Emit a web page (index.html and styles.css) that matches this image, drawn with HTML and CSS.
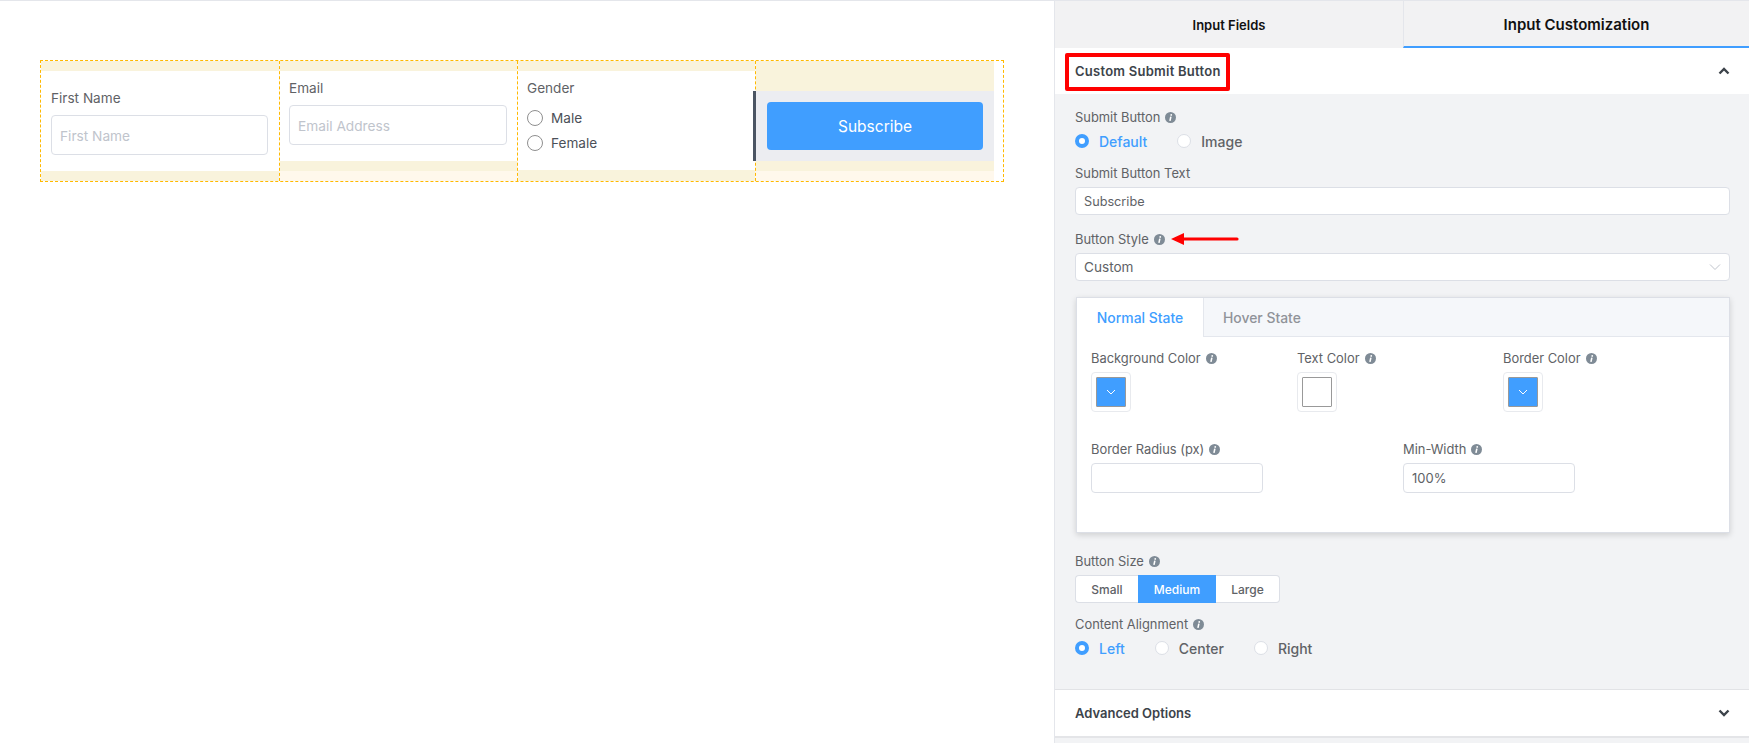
FILE: index.html
```html
<!DOCTYPE html>
<html lang="en">
<head>
  <meta charset="UTF-8" />
  <title>Custom Submit Button</title>
  <meta name="viewport" content="width=device-width, initial-scale=1.0" />
  <link rel="stylesheet" href="styles.css">
</head>
<body>

<svg class="defs" width="0" height="0">
  <symbol id="info" viewBox="0 0 12 12">
    <circle cx="6" cy="6" r="6" fill="#7f8b96"/>
    <circle cx="6.8" cy="3.2" r="1" fill="#fff"/>
    <path d="M6.4 5 5.4 9.6" stroke="#fff" stroke-width="1.7" fill="none"/>
  </symbol>
</svg>

<div class="page">
  <main class="canvas">
    <div class="form-row">
      <div class="col">
        <div class="col-box col-box-tall">
          <div class="col-fill col-first">
            <label class="form-label">First Name</label>
            <input class="form-input" type="text" placeholder="First Name" />
          </div>
        </div>
      </div>
      <div class="col">
        <div class="col-box">
          <div class="col-fill">
            <label class="form-label">Email</label>
            <input class="form-input" type="text" placeholder="Email Address" />
          </div>
        </div>
      </div>
      <div class="col">
        <div class="col-box col-box-tall">
          <div class="col-fill col-gender">
            <label class="form-label">Gender</label>
            <div class="gender-opt"><span class="gender-radio"></span>Male</div>
            <div class="gender-opt"><span class="gender-radio"></span>Female</div>
          </div>
        </div>
      </div>
      <div class="col">
        <div class="col-box col-box-submit">
          <div class="col-submit">
            <button class="subscribe-btn" type="button">Subscribe</button>
          </div>
        </div>
      </div>
    </div>
  </main>

  <aside class="panel">
    <div class="panel-tabs">
      <div class="panel-tab">Input Fields</div>
      <div class="panel-tab active">Input Customization</div>
    </div>

    <div class="section-head">
      <span class="section-title marked">Custom Submit Button</span>
      <svg class="chevron" viewBox="0 0 12 8"><path d="M1.5 6.5 6 2l4.5 4.5"/></svg>
    </div>

    <div class="section-body">
      <div class="field gap-13">
        <div class="field-label">Submit Button <svg class="info"><use href="#info"/></svg></div>
        <div class="radio-row">
          <span class="radio-opt on"><span class="radio"></span>Default</span>
          <span class="radio-opt"><span class="radio"></span>Image</span>
        </div>
      </div>

      <div class="field gap-15">
        <div class="field-label">Submit Button Text</div>
        <input class="text-input" type="text" value="Subscribe" />
      </div>

      <div class="field gap-16">
        <div class="field-label">Button Style <svg class="info"><use href="#info"/></svg>
          <svg class="red-arrow" viewBox="0 0 68 12"><path d="M0 6 13 0v4.4h53a1.6 1.6 0 0 1 0 3.2H13V12z"/></svg>
        </div>
        <div class="select-box">
          <span>Custom</span>
          <svg class="select-caret" viewBox="0 0 12 8"><path d="M1 1.5 6 6.5l5-5"/></svg>
        </div>
      </div>

      <div class="state-card">
        <div class="state-tabs">
          <div class="state-tab active">Normal State</div>
          <div class="state-tab">Hover State</div>
        </div>
        <div class="state-body">
          <div class="color-grid">
            <div>
              <div class="field-label">Background Color <svg class="info"><use href="#info"/></svg></div>
              <div class="swatch"><div class="swatch-in blue"><svg viewBox="0 0 12 8"><path d="M2 2l4 4 4-4"/></svg></div></div>
            </div>
            <div>
              <div class="field-label">Text Color <svg class="info"><use href="#info"/></svg></div>
              <div class="swatch"><div class="swatch-in"></div></div>
            </div>
            <div>
              <div class="field-label">Border Color <svg class="info"><use href="#info"/></svg></div>
              <div class="swatch"><div class="swatch-in blue"><svg viewBox="0 0 12 8"><path d="M2 2l4 4 4-4"/></svg></div></div>
            </div>
          </div>
          <div class="size-grid">
            <div>
              <div class="field-label">Border Radius (px) <svg class="info"><use href="#info"/></svg></div>
              <input class="text-input small" type="text" />
            </div>
            <div>
              <div class="field-label">Min-Width <svg class="info"><use href="#info"/></svg></div>
              <input class="text-input small" type="text" value="100%" />
            </div>
          </div>
        </div>
      </div>

      <div class="field gap-12">
        <div class="field-label">Button Size <svg class="info"><use href="#info"/></svg></div>
        <div class="btn-group">
          <span class="btn-opt">Small</span>
          <span class="btn-opt on">Medium</span>
          <span class="btn-opt">Large</span>
        </div>
      </div>

      <div class="field">
        <div class="field-label">Content Alignment <svg class="info"><use href="#info"/></svg></div>
        <div class="radio-row">
          <span class="radio-opt on"><span class="radio"></span>Left</span>
          <span class="radio-opt"><span class="radio"></span>Center</span>
          <span class="radio-opt"><span class="radio"></span>Right</span>
        </div>
      </div>
    </div>

    <div class="section-head section-closed">
      <span class="section-title">Advanced Options</span>
      <svg class="chevron" viewBox="0 0 12 8"><path d="M1.5 1.5 6 6l4.5-4.5"/></svg>
    </div>
  </aside>
</div>

</body>
</html>
```

FILE: styles.css
```css
* { box-sizing: border-box; }
html, body { margin: 0; height: 100%; overflow: hidden; }
body {
  font-family: Inter, "Noto Sans", Arial, sans-serif;
  background: white;
  color: #606266;
}
.defs { position: absolute; }
.page {
  display: flex;
  height: 743px;
  border-top: 1px solid #e4e6eb;
}

/* left canvas */
.canvas { flex: 1; padding: 59px 40px 0; }
.form-row {
  display: grid;
  grid-template-columns: 238px 238px 238px 239px;
  width: 964px;
  height: 122px;
  padding-right: 9px;
  border: 1px dashed #ffb900;
}
.col { background: #fff8ec; border-left: 1px dashed #ffb900; height: 120px; }
.col:first-child { border-left: none; }
.col-box { background: #f9f3dc; padding: 10px 0; height: 110px; }
.col-box-tall { height: 120px; }
.col-box-submit { padding: 30px 0 10px; }
.col-fill { background: white; height: 90px; padding: 8px 10px 0 9px; }
.col-first { height: 100px; padding: 18px 11px 0 10px; }
.col-gender { height: 99px; padding-left: 9px; }
.form-label { display: block; font-size: 13.6px; line-height: 18px; margin-bottom: 8px; color: #5f6266; }
.form-input {
  display: block;
  width: 100%;
  height: 40px;
  padding: 1px 8px 0;
  border: 1px solid #dcdfe6;
  border-radius: 4px;
  font: 13.7px Inter, sans-serif;
}
.form-input::placeholder { color: #c0c4cc; }
.gender-opt { display: flex; align-items: center; height: 25px; font-size: 13.6px; color: #4b5058; }
.gender-radio {
  width: 16px;
  height: 16px;
  margin-right: 8px;
  border: 1px solid #8f8f8f;
  border-radius: 50%;
  background: white;
}
.col-submit {
  background: #ecedf1;
  border-left: 3px solid #4b5563;
  margin-left: -3px;
  height: 70px;
  padding: 11px;
}
.subscribe-btn {
  display: block;
  width: 100%;
  height: 48px;
  border: none;
  border-radius: 4px;
  background: #409eff;
  color: white;
  font: 15.5px Inter, sans-serif;
}

/* right panel */
.panel {
  width: 695px;
  background: #f2f3f5;
  border-left: 1px solid #e4e6eb;
}
.panel-tabs { display: flex; height: 47px; background: #f2f2f3; }
.panel-tab {
  flex: 1;
  display: flex;
  align-items: center;
  justify-content: center;
  font-size: 13px;
  font-weight: 600;
  color: #111;
  border-left: 1px solid #e4e6eb;
}
.panel-tab:first-child { flex: 0 0 348px; border-left: none; }
.panel-tab.active { font-size: 15px; border-bottom: 2px solid #409eff; padding-top: 2px; }

.section-head {
  display: flex;
  justify-content: space-between;
  align-items: center;
  height: 46px;
  padding: 0 19px 0 20px;
  background: white;
}
.section-title { font-size: 13px; font-weight: 600; color: #3c434a; }
.marked { position: relative; letter-spacing: 0.25px; }
.marked::after {
  content: "";
  position: absolute;
  left: -10px;
  right: -9px;
  top: -10px;
  bottom: -12px;
  border: 4px solid #f00;
  border-radius: 2px;
}
.chevron { width: 12px; height: 8px; fill: none; stroke: #3c434a; stroke-width: 2.4; }
.section-closed {
  height: 49px;
  margin-top: 31px;
  border-top: 1px solid #e2e3e6;
  border-bottom: 2px solid #e4e5e8;
}

.section-body { padding: 14px 19px 0 20px; }
.field { margin-bottom: 0; }
.gap-12 { margin-bottom: 12px; }
.gap-13 { margin-bottom: 13px; }
.gap-15 { margin-bottom: 15px; }
.gap-16 { margin-bottom: 16px; }
.field-label {
  display: flex;
  align-items: center;
  gap: 5px;
  height: 18px;
  font-size: 12.9px;
  color: #606266;
  margin-bottom: 5px;
}
.info { width: 11px; height: 11px; }
.red-arrow { width: 68px; height: 12px; fill: #f00; margin-left: 1px; }
.radio-row { display: flex; gap: 30px; height: 20px; align-items: center; }
.radio-opt { display: flex; align-items: center; gap: 10px; font-size: 14px; font-weight: 500; color: #606266; }
.radio-opt.on { color: #409eff; }
.radio {
  width: 14px;
  height: 14px;
  border: 1px solid #dcdfe6;
  border-radius: 50%;
  background: white;
}
.radio-opt.on .radio { border: 4.5px solid #409eff; }
.text-input {
  display: block;
  width: 100%;
  height: 28px;
  padding: 0 8px;
  border: 1px solid #dcdfe6;
  border-radius: 4px;
  background: white;
  font: 12.7px Inter, sans-serif;
  color: #606266;
}
.text-input.small { width: 172px; height: 30px; font-size: 13px; }
.select-box {
  display: flex;
  justify-content: space-between;
  align-items: center;
  height: 28px;
  padding: 0 8px;
  border: 1px solid #dcdfe6;
  border-radius: 4px;
  background: white;
  font-size: 13.6px;
}
.select-caret { width: 12px; height: 8px; fill: none; stroke: #c0c4cc; stroke-width: 1; }

.state-card {
  height: 236px;
  margin: 0 0 19px 1px;
  background: white;
  border: 1px solid #dcdfe6;
  box-shadow: 0 2px 6px rgba(0,0,0,0.15);
}
.state-tabs { display: flex; height: 39px; background: #f5f7fa; border-bottom: 1px solid #e4e7ed; }
.state-tab {
  display: flex;
  align-items: center;
  height: 39px;
  padding: 0 19px;
  font-size: 13.9px;
  font-weight: 500;
  color: #909399;
}
.state-tab.active {
  width: 127px;
  justify-content: center;
  padding: 0;
  color: #409eff;
  background: white;
  border-right: 1px solid #e4e7ed;
}
.state-body { padding: 12px 14px 0; }
.color-grid { display: grid; grid-template-columns: 206px 206px 206px; margin-bottom: 28px; }
.swatch {
  width: 40px;
  height: 40px;
  padding: 4px;
  border: 1px solid #e8eaee;
  border-radius: 4px;
}
.swatch-in {
  display: flex;
  align-items: center;
  justify-content: center;
  height: 30px;
  border: 1px solid #999;
  border-radius: 1px;
  background: white;
}
.swatch-in.blue { background: #409eff; }
.swatch-in svg { width: 12px; height: 8px; fill: none; stroke: white; stroke-width: 1; }
.size-grid { display: grid; grid-template-columns: 312px 312px; }

.btn-group { display: flex; width: 205px; height: 28px; }
.btn-opt {
  display: flex;
  align-items: center;
  justify-content: center;
  width: 63px;
  background: white;
  border: 1px solid #dcdfe6;
  border-right: none;
  border-radius: 4px 0 0 4px;
  font-size: 12px;
  font-weight: 500;
}
.btn-opt.on { width: 78px; border: none; border-radius: 0; background: #409eff; color: white; }
.btn-opt:last-child { width: 64px; border-right: 1px solid #dcdfe6; border-left: none; border-radius: 0 4px 4px 0; }
```
